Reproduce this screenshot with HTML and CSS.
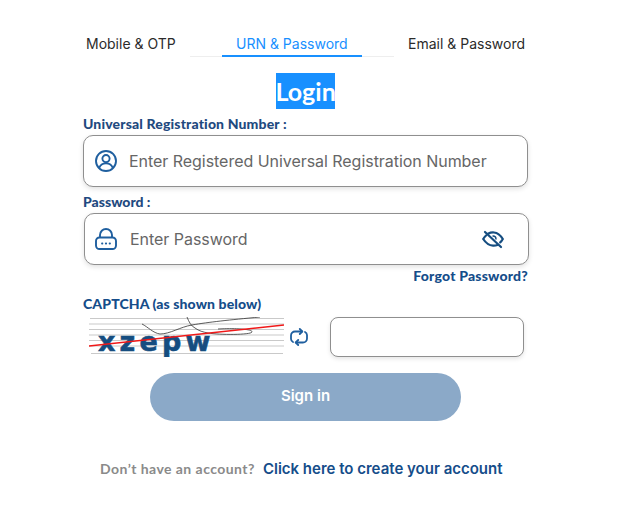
FILE: index.html
```html
<!DOCTYPE html>
<html lang="en">
<head>
<meta charset="utf-8">
<title>Login</title>
<link rel="stylesheet" href="styles.css">
</head>
<body>
<main class="page">
  <nav class="tabs">
    <div class="tab tab-mobile">Mobile &amp; OTP</div>
    <div class="tab tab-urn">URN &amp; Password</div>
    <div class="tab tab-email">Email &amp; Password</div>
  </nav>
  <div class="heading-row"><h1 class="heading">Login</h1></div>
  <label class="label label-urn">Universal Registration Number :</label>
  <div class="field field-urn">
    <svg class="icon-lead" width="24" height="24" viewBox="0 0 24 24" fill="none" stroke="#1f5f9f" stroke-width="1.9"><circle cx="12" cy="12" r="10"/><circle cx="12" cy="9.6" r="3.6"/><path d="M5.2 19c1-3 3.600-4.600 6.800-4.600s5.800 1.600 6.800 4.600"/></svg>
    <span class="placeholder">Enter Registered Universal Registration Number</span>
  </div>
  <label class="label label-pass">Password :</label>
  <div class="field field-pass">
    <svg class="icon-lead" width="24" height="24" viewBox="0 0 24 24" fill="none" stroke="#1f5f9f" stroke-width="1.9"><path d="M6 11V8a6 6 0 0 1 12 0v3"/><rect x="2" y="10.500" width="20" height="11.500" rx="3.500"/><path d="M8 16.500h.4M11.800 16.500h.4M15.600 16.500h.4" stroke-width="1.800" stroke-linecap="round"/></svg>
    <span class="placeholder">Enter Password</span>
    <svg class="icon-eye" width="24" height="24" viewBox="0 0 24 24" fill="none" stroke="#154d80" stroke-width="2.200" stroke-linecap="round"><path d="M4 5l16 15"/><path d="M7 6.800C9 5.700 11 5.300 13 5.500c3.500.3 6.500 2.800 8.800 6.500-.7 1.300-1.600 2.500-2.600 3.400M16.400 18c-1.400.6-2.900.8-4.400.7-3.800-.3-7.300-2.900-9.800-6.700 1-1.500 2-2.700 3.100-3.700"/><path d="M12 9c1.600 0 3 1.300 3 3" stroke-width="1.400"/></svg>
  </div>
  <div class="forgot-row"><a class="forgot">Forgot Password?</a></div>
  <label class="label label-captcha">CAPTCHA (as shown below)</label>
  <div class="captcha-row">
    <svg class="captcha" width="195" height="40" viewBox="0 0 195 40" fill="none">
      <g stroke="#c9c9c9" stroke-width="1"><path d="M1 1.500h194M0 7h195M0 12.500h195M0 18h195M0 23.500h195M0 29h195M2 36.500h192"/></g>
      <text class="captcha-text" x="9" y="34">xzepw</text>
      <path d="M53 7c6 3 11 9 18 10 10 0 20-7 32-9 17-3 37-5 68-8" stroke="#333" stroke-width=".8"/>
      <path d="M98 0c2 5 4 9 8 11 4 3 8 4 13 5 11 2 43 2 44-1 1-3-18-4-34-3" stroke="#333" stroke-width=".8"/>
      <path d="M0 29L195 8" stroke="#f01818" stroke-width="1.600"/>
    </svg>
    <svg class="icon-refresh" width="18" height="18" viewBox="0 0 18 18" fill="none" stroke="#1f5f9f" stroke-width="1.800" stroke-linecap="round" stroke-linejoin="round"><path d="M12 3.500H5a4 4 0 0 0-4 4v3.500a3.500 3.500 0 0 0 2 3"/><path d="M9.800 1l2.500 2.500L9.800 6"/><path d="M6 14.500h7a4 4 0 0 0 4-4V7a3.500 3.500 0 0 0-2-3"/><path d="M8.200 12l-2.500 2.500 2.500 2.500"/></svg>
    <div class="captcha-input"></div>
  </div>
  <div class="button-row"><button class="signin">Sign in</button></div>
  <p class="footer"><span class="footer-q">Don’t have an account?</span><a class="footer-link">Click here to create your account</a></p>
</main>
</body>
</html>
```
FILE: styles.css
```css
* { box-sizing: border-box; }
html, body { margin: 0; padding: 0; background: #fff; }
body { width: 618px; height: 518px; overflow: hidden; font-family: Inter, "Liberation Sans", sans-serif; }
.page { width: 446px; margin-left: 83px; padding-top: 33px; }

.tabs { display: flex; height: 24px; position: relative; }
.tab { font-size: 14px; line-height: 22px; color: #2b2b2b; white-space: nowrap; }
.tab-mobile { width: 107px; padding-left: 3px; }
.tab-urn { width: 204px; padding-left: 46px; color: #1890ff; border-bottom: 1px solid #eeeeee; position: relative; }
.tab-urn::after { content: ""; position: absolute; left: 32px; width: 140px; bottom: -1px; height: 2px; background: #1890ff; }
.tab-email { padding-left: 14px; }

.heading-row { display: flex; justify-content: center; margin-top: 16px; padding-right: 2px; }
.heading { margin: 0; background: #1890ff; color: #fff; font-size: 25px; line-height: 36px; font-weight: 700; font-family: Lato, Inter, sans-serif; width: 59px; text-align: center; white-space: nowrap; }

.label { display: block; font-family: Lato, sans-serif; font-weight: 900; font-size: 14px; line-height: 16px; color: #1f4a80; white-space: nowrap; }
.label-urn { margin-top: 7px; letter-spacing: .15px; }
.label-pass { margin-top: 7px; }
.label-captcha { margin-top: 12px; color: #154d8a; letter-spacing: .1px; }

.field { display: flex; align-items: center; height: 52px; border: 1px solid #8f8f8f; border-radius: 10px; background: #fff; box-shadow: 0 2px 5px rgba(0,0,0,.12); margin-top: 3px; }
.field-urn { width: 445px; padding-left: 10px; }
.field-pass { width: 445px; margin-left: 1px; padding-left: 9px; }
.icon-lead { flex: none; }
.placeholder { font-size: 16px; color: #666; white-space: nowrap; letter-spacing: -.04px; }
.field-urn .placeholder { margin-left: 11px; }
.field-pass .placeholder { margin-left: 12px; }
.icon-eye { margin-left: auto; margin-right: 23px; flex: none; }

.forgot-row { display: flex; justify-content: flex-end; padding-right: 1px; margin-top: 3px; }
.forgot { font-family: Lato, sans-serif; font-weight: 900; font-size: 14px; line-height: 16px; letter-spacing: .2px; color: #154d8a; }

.captcha-row { display: flex; align-items: center; margin-top: 5px; height: 40px; padding-left: 6px; }
.captcha { flex: none; }
.captcha-text { font-family: "DejaVu Sans", sans-serif; font-weight: 700; font-size: 27px; letter-spacing: 4.2px; fill: #154d80; stroke: #154d80; stroke-width: .6px; }
.icon-refresh { flex: none; margin-left: 6px; }
.captcha-input { width: 194px; height: 40px; margin-left: 22px; border: 1px solid #8f8f8f; border-radius: 8px; background: #fff; box-shadow: 0 2px 4px rgba(0,0,0,.1); }

.button-row { margin-top: 16px; padding-left: 67px; }
.signin { display: block; width: 311px; height: 48px; padding: 0 0 4px; border: 0; border-radius: 24px; background: #8ba9c8; color: #fff; font-family: Inter, sans-serif; font-weight: 600; font-size: 15px; }

.footer { display: flex; align-items: baseline; margin: 38px 0 0; padding-left: 17px; white-space: nowrap; }
.footer-q { font-family: Lato, sans-serif; font-weight: 700; font-size: 14px; letter-spacing: .45px; color: #8a8a8a; }
.footer-link { margin-left: 8px; font-family: Inter, sans-serif; font-weight: 600; font-size: 15px; color: #154d8a; }
```
